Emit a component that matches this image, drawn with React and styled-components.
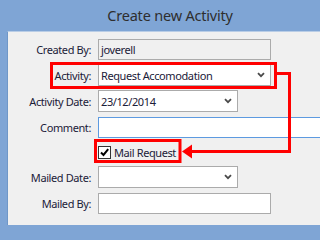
import React from "react";
import styled, { createGlobalStyle } from "styled-components";

const Global = createGlobalStyle`
  html, body { margin: 0; padding: 0; background: #7fa5d5; overflow: hidden; }
  body { font-family: "Noto Sans", "Open Sans", "DejaVu Sans", sans-serif; }
`;

const Viewport = styled.div`
  position: relative;
  width: 100vw;
  height: 100vh;
  overflow: hidden;
`;

const Window = styled.div`
  width: 340px;
  height: 260px;
  background: #7fa5d5;
  display: flex;
  flex-direction: column;
`;

const TitleBar = styled.div`
  height: 31px;
  display: flex;
  align-items: center;
  justify-content: center;
  font-size: 14.5px;
  letter-spacing: -0.2px;
  color: #2e2e2e;
  padding-bottom: 1px;
  box-sizing: border-box;
`;

const Frame = styled.div`
  padding: 0 8px 0 7px;
  display: flex;
`;

const Panel = styled.div`
  flex: 1;
  height: 194px;
  background: #f0f0f0;
  border-left: 1px solid #6f97c8;
  border-top: 1px solid #b9cde6;
  box-sizing: border-box;
  padding-top: 4px;
  display: grid;
  grid-template-columns: 83px 1fr;
  grid-template-rows: 26px 26px 26px 26px 24px 26px 26px;
  column-gap: 7px;
  align-items: center;
  font-size: 11px;
  letter-spacing: -0.4px;
  color: #1b2038;
`;

const Label = styled.div`
  text-align: right;
  white-space: nowrap;
`;

const TextBox = styled.div`
  width: ${(p) => p.$w}px;
  height: 21px;
  box-sizing: border-box;
  border: 1px solid ${(p) => (p.$focus ? "#5d9ae0" : "#ababab")};
  background: ${(p) => (p.$readOnly ? "#f0f0f0" : "#fff")};
  display: flex;
  align-items: center;
  padding-left: 2px;
`;

const Combo = styled.div`
  width: ${(p) => p.$w}px;
  height: 22px;
  box-sizing: border-box;
  border: 1px solid #ababab;
  background: #fff;
  display: flex;
  align-items: center;
  justify-content: space-between;
  padding: 0 5px 0 2px;
`;

const CheckRow = styled.label`
  display: flex;
  align-items: center;
  gap: 3px;
`;

const CheckBox = styled.span`
  width: 13px;
  height: 13px;
  box-sizing: border-box;
  border: 1px solid #333;
  background: #fff;
  display: flex;
  align-items: center;
  justify-content: center;
`;

const Overlay = styled.svg`
  position: absolute;
  left: 0;
  top: 0;
  pointer-events: none;
`;

const Chevron = () => (
  <svg width="8" height="6" viewBox="0 0 8 6">
    <path d="M1 1.2 L4 4.2 L7 1.2" fill="none" stroke="#4a4a4a" strokeWidth="1.8" />
  </svg>
);

export default function App() {
  return (
    <>
      <Global />
      <Viewport>
        <Window>
          <TitleBar>Create new Activity</TitleBar>
          <Frame>
            <Panel>
              <Label>Created By:</Label>
              <TextBox $w={173} $readOnly>joverell</TextBox>

              <Label>Activity:</Label>
              <Combo $w={173}>
                <span>Request Accomodation</span>
                <Chevron />
              </Combo>

              <Label>Activity Date:</Label>
              <Combo $w={140}>
                <span>23/12/2014</span>
                <Chevron />
              </Combo>

              <Label>Comment:</Label>
              <TextBox $w={230} $focus />

              <span />
              <CheckRow>
                <CheckBox>
                  <svg width="11" height="11" viewBox="0 0 11 11">
                    <path d="M2 5.5 L4.5 8 L9.2 2.2" fill="none" stroke="#000" strokeWidth="2" />
                  </svg>
                </CheckBox>
                Mail Request
              </CheckRow>

              <Label>Mailed Date:</Label>
              <Combo $w={140}>
                <span />
                <Chevron />
              </Combo>

              <Label>Mailed By:</Label>
              <TextBox $w={173} />
            </Panel>
          </Frame>
        </Window>
        <Overlay width="296" height="235" viewBox="0 0 296 235">
          <rect x="51.5" y="63.5" width="224" height="24" fill="none" stroke="#ff0000" strokeWidth="3" />
          <rect x="95.5" y="140.5" width="84.5" height="21" fill="none" stroke="#ff0000" strokeWidth="3" />
          <path d="M277 73.5 H289.5 V151.5 H190" fill="none" stroke="#ff0000" strokeWidth="3" />
          <polygon points="182,151.5 192,144.5 192,158.5" fill="#ff0000" />
        </Overlay>
      </Viewport>
    </>
  );
}
